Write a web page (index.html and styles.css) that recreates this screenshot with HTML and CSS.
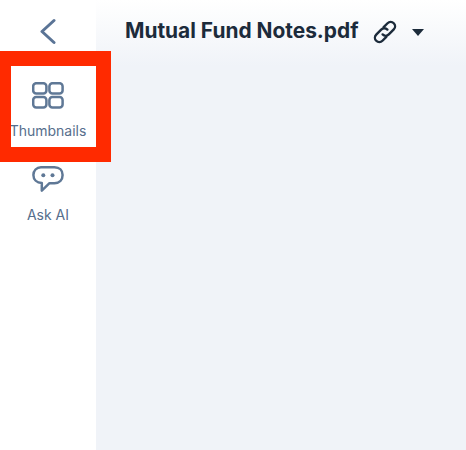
FILE: index.html
```html
<!DOCTYPE html>
<html lang="en">
<head>
  <meta charset="UTF-8" />
  <meta name="viewport" content="width=device-width, initial-scale=1" />
  <title>Mutual Fund Notes.pdf</title>
  <link rel="stylesheet" href="styles.css">
</head>
<body>
  <div class="app">
    <aside class="sidebar">
      <div class="back">
        <svg width="16" height="28" viewBox="0 0 16 28" fill="none" stroke="#5a7496" stroke-width="3" stroke-linecap="round" stroke-linejoin="round">
          <path d="M14 2.5 L2 13.5 L14 24.5"/>
        </svg>
      </div>
      <div class="tool tool-thumbs">
        <svg width="32" height="27" viewBox="0 0 32 27" fill="none" stroke="#5f7896" stroke-width="2.5">
          <rect x="1.2" y="1.2" width="13.2" height="10.4" rx="3"/>
          <rect x="17.4" y="1.2" width="13.2" height="10.4" rx="3"/>
          <rect x="1.2" y="15" width="13.2" height="10.4" rx="3"/>
          <rect x="17.4" y="15" width="13.2" height="10.4" rx="3"/>
        </svg>
        <span class="tool-label">Thumbnails</span>
      </div>
      <div class="tool tool-ai">
        <svg width="32" height="27" viewBox="0 0 32 27" fill="none">
          <path d="M9 1.3 H22.5 C27.5 1.3 30.6 4.6 30.6 9 C30.6 13.8 27.5 17.2 22.5 17.2 H17.5 L9.8 24.6 V17 C4.8 16.8 1.4 13.6 1.4 9 C1.4 4.6 4.5 1.3 9 1.3 Z" stroke="#5f7896" stroke-width="2.5" stroke-linejoin="round"/>
          <circle cx="11.3" cy="9.3" r="2" fill="#5f7896"/>
          <circle cx="20.5" cy="9.3" r="2" fill="#5f7896"/>
        </svg>
        <span class="tool-label">Ask AI</span>
      </div>
      <div class="highlight"></div>
    </aside>
    <main class="viewer">
      <header class="doc-header">
        <h1 class="doc-title">Mutual Fund Notes.pdf</h1>
        <svg class="link-icon" width="24" height="24" viewBox="0 0 24 24" fill="none" stroke="#1c2b3b" stroke-width="2.4" stroke-linecap="round" stroke-linejoin="round">
          <g transform="rotate(-45 12 12)">
            <path d="M9.5 16.4 H4 a4.4 4.4 0 0 1 0 -8.8 H11 a4.4 4.4 0 0 1 4.4 4.4"/>
            <path d="M14.5 7.6 H20 a4.4 4.4 0 0 1 0 8.8 H13 a4.4 4.4 0 0 1 -4.4 -4.4"/>
          </g>
        </svg>
        <span class="caret"></span>
      </header>
    </main>
  </div>
</body>
</html>
```

FILE: styles.css
```css
* {
  box-sizing: border-box;
}

html,
body {
  margin: 0;
  height: 100%;
}

body {
  font-family: 'Inter', 'Liberation Sans', sans-serif;
  background: #fff;
  overflow: hidden;
}

.app {
  display: flex;
  height: 450px;
}

.sidebar {
  position: relative;
  width: 96px;
  flex-shrink: 0;
  display: flex;
  flex-direction: column;
  align-items: center;
  background: #fff;
}

.back {
  display: flex;
  justify-content: center;
  height: 81px;
  padding-top: 18px;
}

.tool {
  display: flex;
  flex-direction: column;
  align-items: center;
  width: 96px;
}

.tool-thumbs {
  height: 84px;
  padding-top: 1px;
}

.tool-label {
  margin-top: 12px;
  font-size: 14px;
  line-height: 19px;
  color: #566e8c;
  white-space: nowrap;
}

.tool-ai {
  padding-top: 1px;
}

.highlight {
  position: absolute;
  left: -4px;
  top: 51px;
  width: 115px;
  height: 111px;
  border: 15px solid #ff2a00;
}

.viewer {
  flex: 1;
  background: linear-gradient(to bottom, #fff 0, #f0f3f8 66px);
}

.doc-header {
  display: flex;
  align-items: center;
  height: 63px;
  padding-left: 29px;
}

.doc-title {
  margin: 0;
  font-size: 20.9px;
  font-weight: 700;
  line-height: 1;
  color: #1c2b3b;
  white-space: nowrap;
}

.link-icon {
  margin: 1px 0 0 14px;
}

.caret {
  width: 0;
  height: 0;
  margin: 2px 0 0 15px;
  border-left: 6.5px solid transparent;
  border-right: 6.5px solid transparent;
  border-top: 7px solid #1c2b3b;
}
```
